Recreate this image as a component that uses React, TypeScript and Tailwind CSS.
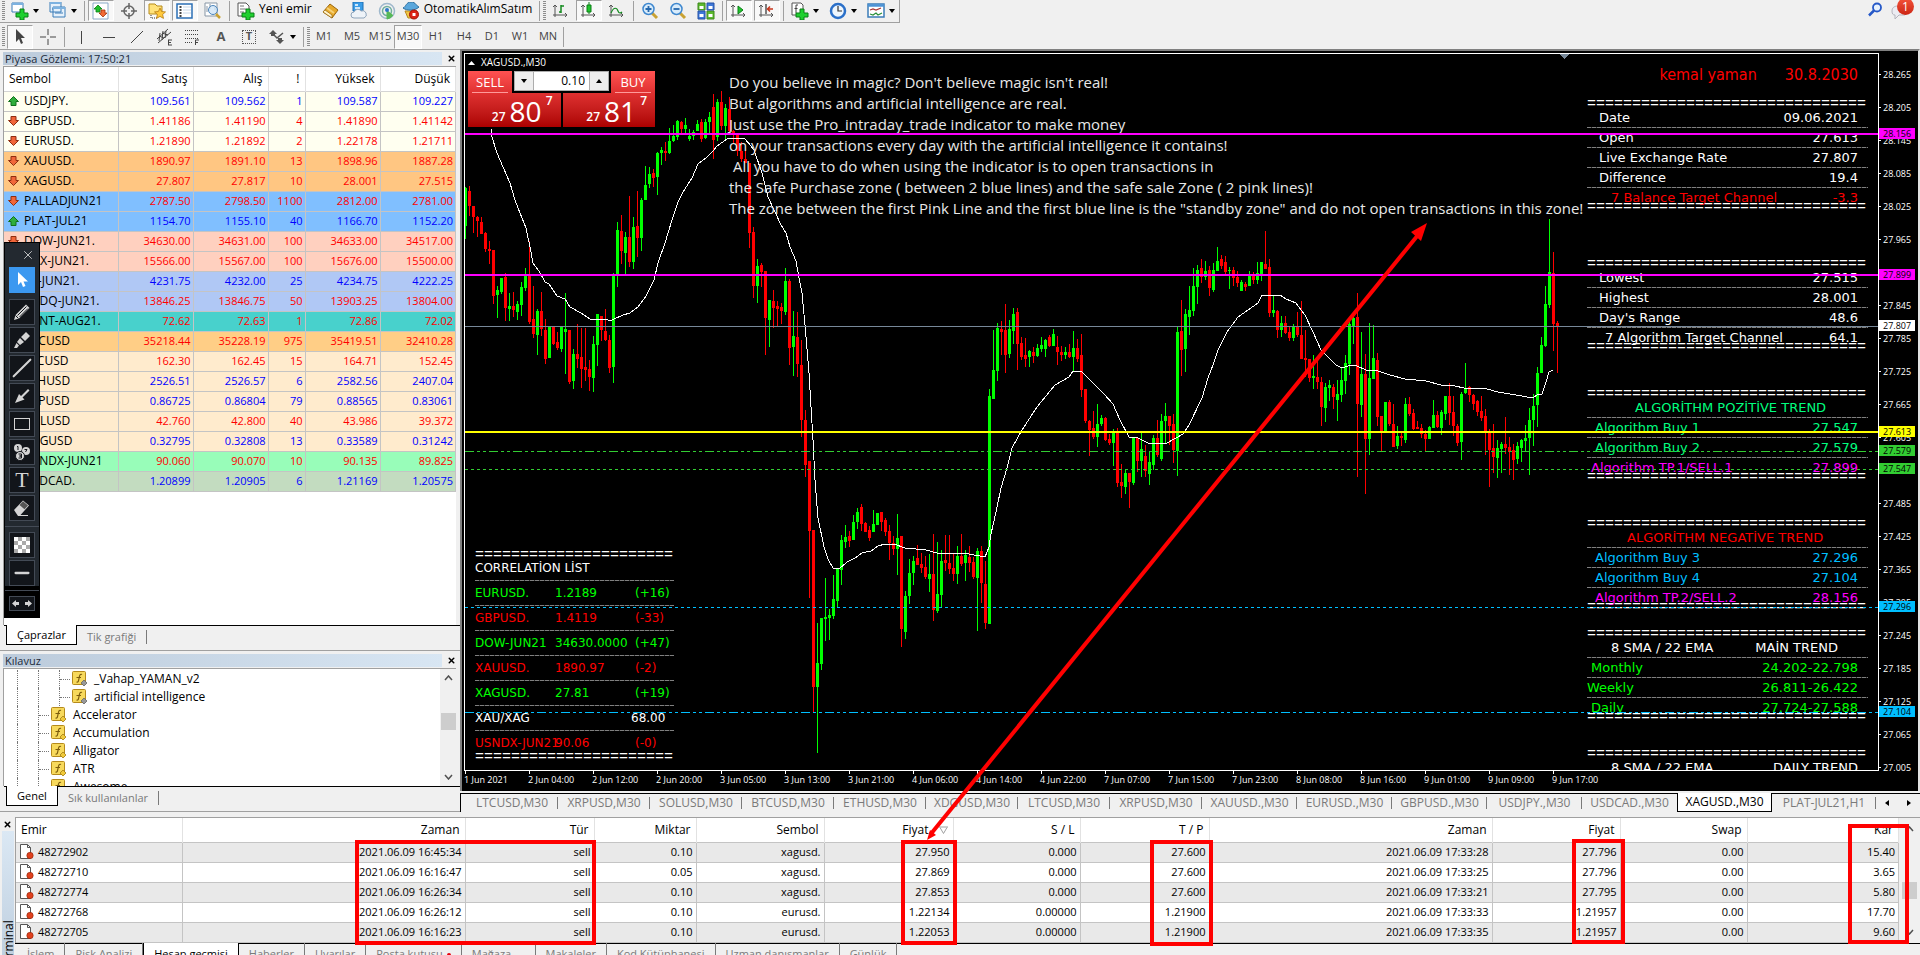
import React from 'react';
import { Minus, Slash, X } from 'lucide-react';

// [high, body top, body bottom, low, rising] in chart pixels
const CANDLES: number[][] = [
  [187,188,226,239,1],[186,191,206,216,0],[206,206,217,233,0],[216,217,221,237,0],[217,222,234,234,0],[232,233,249,252,0],
  [241,249,251,264,0],[250,250,296,304,0],[286,290,295,318,1],[278,278,292,294,1],[273,277,308,321,0],[293,306,309,321,1],
  [292,306,310,317,0],[301,304,312,320,1],[282,287,305,316,1],[268,276,288,291,1],[241,276,322,324,0],[286,319,334,338,0],
  [309,311,335,355,1],[292,311,329,336,0],[319,330,359,364,0],[327,327,358,358,1],[327,327,344,345,0],[332,342,348,350,0],
  [326,327,349,352,1],[293,329,332,374,1],[330,330,382,384,0],[349,354,381,389,1],[324,354,359,368,0],[328,357,369,388,0],
  [328,367,370,381,0],[360,369,377,391,0],[336,344,378,392,1],[314,314,345,366,1],[316,316,330,341,0],[309,331,340,341,0],
  [335,340,368,373,0],[273,274,367,383,1],[222,230,274,287,1],[215,231,251,264,0],[232,237,253,275,1],[196,237,262,267,0],
  [217,227,262,269,1],[191,226,238,257,0],[198,200,238,251,1],[166,185,200,200,1],[167,174,184,188,1],[169,173,178,187,0],
  [152,153,177,195,1],[147,150,153,165,1],[142,151,153,161,0],[128,141,153,154,1],[125,136,141,142,1],[120,121,137,140,1],
  [121,122,129,135,0],[118,125,129,134,1],[129,136,139,141,1],[130,132,136,140,1],[120,124,131,131,1],[119,122,139,142,0],
  [119,122,138,139,1],[112,117,122,134,1],[94,107,140,159,0],[99,102,137,141,1],[91,102,126,130,0],[104,108,126,140,1],
  [97,109,131,133,0],[130,131,134,143,0],[133,133,151,156,0],[142,151,159,162,0],[150,159,163,163,0],[163,163,233,248,0],
  [227,232,286,298,0],[259,266,286,303,1],[263,265,272,287,0],[271,271,318,355,0],[300,300,320,347,1],[290,301,308,328,0],
  [301,306,309,326,0],[303,307,311,324,0],[268,281,312,315,1],[279,281,348,365,0],[311,336,347,376,1],[312,337,364,377,0],
  [340,365,420,437,0],[410,420,465,477,0],[461,461,531,598,0],[530,530,687,713,0],[623,663,687,753,1],[618,618,664,670,1],
  [578,617,619,641,1],[609,615,618,640,1],[575,599,616,619,1],[568,569,601,608,1],[535,540,570,585,1],[525,537,542,548,1],
  [531,536,541,547,0],[515,522,540,540,1],[508,512,522,529,1],[504,507,524,531,0],[522,523,532,532,0],[526,530,538,541,0],
  [510,524,532,532,1],[513,513,525,525,1],[512,512,522,531,0],[518,520,532,536,0],[525,531,543,560,0],[536,543,549,555,0],
  [514,538,549,575,1],[536,536,629,647,0],[591,596,632,639,1],[559,573,596,604,1],[556,561,573,585,1],[545,558,565,565,0],
  [553,564,568,573,0],[556,567,577,579,0],[554,574,579,592,1],[534,574,610,621,0],[542,594,611,613,1],[550,561,595,608,1],
  [535,560,563,571,0],[535,563,569,574,0],[553,568,574,581,0],[546,556,574,584,1],[534,556,564,566,0],[550,555,563,581,1],
  [546,557,563,572,0],[557,562,577,579,0],[548,551,578,631,1],[546,551,583,603,0],[561,584,623,629,0],[389,396,624,624,1],
  [330,370,399,399,1],[323,328,371,381,1],[321,329,332,355,0],[304,330,355,373,0],[320,329,354,358,1],[308,314,331,344,1],
  [308,312,344,370,0],[337,343,357,360,0],[338,355,359,367,0],[350,351,357,367,1],[347,352,356,363,0],[344,348,356,357,1],
  [337,345,349,352,1],[339,340,349,357,1],[335,337,346,347,0],[329,334,346,346,1],[336,347,352,365,0],[346,352,355,361,0],
  [347,352,355,359,1],[344,352,357,358,0],[331,348,357,372,1],[339,348,359,362,0],[334,355,390,397,0],[389,389,421,423,0],
  [420,421,430,456,0],[411,428,437,439,0],[404,424,437,447,1],[415,418,424,426,1],[417,418,440,441,0],[434,439,443,445,0],
  [429,433,443,466,1],[428,433,483,487,0],[464,482,486,498,0],[469,473,487,494,1],[473,473,482,508,0],[437,438,483,485,1],
  [437,438,461,472,0],[433,449,461,477,1],[445,456,471,477,0],[451,462,474,485,1],[435,438,465,470,1],[420,438,455,457,0],
  [414,421,459,461,1],[403,416,421,444,1],[416,416,426,445,0],[414,424,450,463,0],[326,332,451,476,1],[300,331,350,376,0],
  [309,314,349,372,1],[286,310,317,335,1],[268,286,311,316,1],[265,270,287,304,1],[259,268,277,283,0],[261,271,277,280,1],
  [266,270,288,296,0],[263,270,290,292,1],[247,261,271,271,1],[255,259,266,269,0],[256,262,272,276,0],[267,270,271,289,1],
  [267,270,278,286,0],[271,277,283,287,0],[280,282,291,291,1],[282,284,287,291,0],[271,275,286,286,1],[272,275,280,284,0],
  [262,273,280,284,1],[262,262,274,281,1],[231,264,269,269,0],[259,267,313,317,0],[296,310,313,317,1],[310,311,330,338,0],
  [316,323,330,337,1],[316,323,333,334,0],[327,332,338,341,0],[324,326,338,341,1],[312,327,335,337,0],[301,335,359,359,0],
  [330,358,360,377,0],[359,359,378,382,0],[355,376,378,389,1],[359,377,382,389,0],[377,382,407,426,0],[383,387,408,422,1],
  [380,385,388,401,1],[384,387,397,409,0],[380,394,400,421,1],[367,380,395,402,1],[355,363,381,394,1],[322,324,364,375,1],
  [314,318,326,344,1],[293,317,404,477,0],[332,374,405,417,1],[354,374,439,494,0],[323,378,439,455,1],[325,358,379,379,1],
  [353,360,417,426,0],[416,416,433,452,0],[402,402,433,433,1],[400,402,424,426,0],[404,424,447,447,0],[426,436,446,449,1],
  [433,436,438,446,0],[398,404,440,443,1],[397,404,414,416,0],[409,413,429,430,0],[421,427,429,429,0],[424,428,434,438,0],
  [430,434,439,452,0],[426,427,439,439,1],[400,415,428,428,1],[411,415,427,428,0],[410,412,428,435,1],[396,396,414,420,1],
  [383,396,413,425,0],[396,412,426,436,0],[424,426,443,446,0],[392,394,442,460,1],[363,389,393,394,1],[386,387,395,402,0],
  [394,395,404,410,0],[400,401,412,416,0],[396,411,418,421,0],[409,416,432,455,0],[429,432,450,487,0],[424,448,457,473,0],
  [440,448,458,478,1],[442,444,449,473,1],[417,444,448,454,0],[437,447,452,475,0],[444,450,460,480,0],[442,446,459,464,1],
  [439,440,448,462,1],[425,438,441,451,1],[408,420,438,475,1],[394,406,420,446,1],[367,373,405,427,1],[337,345,373,373,1],
  [286,304,346,347,1],[219,272,305,308,1],[252,273,324,351,0],[321,323,327,373,0],
];

const MOVING_AVERAGE =
  '491,129 492,137 497,153 503,167 510,183 515,200 520,213 526,228 530,247 533,263 539,271 545,282 549,284 557,296 565,299 570,307 581,313 590,319 606,319 610,321 614,319 623,315 630,313 638,307 646,296 654,280 658,263 665,243 672,220 678,202 683,192 692,178 698,164 707,157 713,151 717,146 727,139 732,138 745,139 751,146 754,150 762,173 768,197 775,212 781,225 786,233 790,247 796,261 799,278 802,293 805,325 809,373 813,440 815,480 818,518 824,547 828,559 833,568 839,569 847,562 855,558 862,553 871,551 878,546 885,544 894,544 905,548 926,550 937,553 969,554 985,557 989,547 991,534 996,512 1001,488 1007,468 1012,448 1022,430 1037,407 1055,385 1069,377 1073,371 1082,372 1095,385 1104,394 1113,404 1120,420 1129,437 1138,438 1150,444 1167,443 1183,434 1189,425 1202,398 1208,378 1213,365 1218,350 1227,332 1238,317 1258,303 1262,295 1280,295 1286,299 1296,303 1305,315 1313,332 1321,350 1336,365 1342,368 1351,365 1357,366 1366,370 1378,371 1390,375 1405,379 1426,381 1441,385 1455,386 1464,388 1487,389 1498,392 1516,395 1533,398 1537,395 1542,394 1546,382 1549,372 1553,370';

const LEVELS = [
  { price: 28.156, color: '#ff00ff', width: 2, dash: '' },
  { price: 27.899, color: '#ff00ff', width: 2, dash: '' },
  { price: 27.807, color: '#778899', width: 1, dash: '' },
  { price: 27.613, color: '#ffff00', width: 2, dash: '' },
  { price: 27.579, color: '#32cd32', width: 1, dash: '9 3 3 3 3 3' },
  { price: 27.547, color: '#32cd32', width: 1, dash: '3 3' },
  { price: 27.296, color: '#00bfff', width: 1, dash: '3 3' },
  { price: 27.104, color: '#00bfff', width: 1, dash: '9 3 3 3 3 3' },
];

const priceToY = (price: number) => Math.round((28.265 - price) * 549.6) + 20;

const AXIS_PRICES = Array.from({ length: 22 }, (_, i) => (28.265 - i * 0.06).toFixed(3));

const TIMES = [
  '1 Jun 2021', '2 Jun 04:00', '2 Jun 12:00', '2 Jun 20:00', '3 Jun 05:00', '3 Jun 13:00', '3 Jun 21:00', '4 Jun 06:00', '4 Jun 14:00',
  '4 Jun 22:00', '7 Jun 07:00', '7 Jun 15:00', '7 Jun 23:00', '8 Jun 08:00', '8 Jun 16:00', '9 Jun 01:00', '9 Jun 09:00', '9 Jun 17:00',
];

const QUOTES = [
  { name: 'USDJPY.', up: true, tone: 'text-[#0000ff]', bg: 'bg-[#fffff0]', v: ['109.561', '109.562', '1', '109.587', '109.227'] },
  { name: 'GBPUSD.', up: false, tone: 'text-[#ff0000]', bg: 'bg-[#fffff0]', v: ['1.41186', '1.41190', '4', '1.41890', '1.41142'] },
  { name: 'EURUSD.', up: false, tone: 'text-[#ff0000]', bg: 'bg-[#fffff0]', v: ['1.21890', '1.21892', '2', '1.22178', '1.21711'] },
  { name: 'XAUUSD.', up: false, tone: 'text-[#ff0000]', bg: 'bg-[#ffc682]', v: ['1890.97', '1891.10', '13', '1898.96', '1887.28'] },
  { name: 'XAGUSD.', up: false, tone: 'text-[#ff0000]', bg: 'bg-[#ffc682]', v: ['27.807', '27.817', '10', '28.001', '27.515'] },
  { name: 'PALLADJUN21', up: false, tone: 'text-[#ff0000]', bg: 'bg-[#80bfff]', v: ['2787.50', '2798.50', '1100', '2812.00', '2781.00'] },
  { name: 'PLAT-JUL21', up: true, tone: 'text-[#0000ff]', bg: 'bg-[#80bfff]', v: ['1154.70', '1155.10', '40', '1166.70', '1152.20'] },
  { name: 'DOW-JUN21.', up: false, tone: 'text-[#ff0000]', bg: 'bg-[#ffd0bf]', v: ['34630.00', '34631.00', '100', '34633.00', '34517.00'] },
  { name: 'DAX-JUN21.', up: false, tone: 'text-[#ff0000]', bg: 'bg-[#ffd0bf]', v: ['15566.00', '15567.00', '100', '15676.00', '15500.00'] },
  { name: 'SP-JUN21.', up: true, tone: 'text-[#0000ff]', bg: 'bg-[#b0c8f5]', v: ['4231.75', '4232.00', '25', '4234.75', '4222.25'] },
  { name: 'NSDQ-JUN21.', up: false, tone: 'text-[#ff0000]', bg: 'bg-[#b0c8f5]', v: ['13846.25', '13846.75', '50', '13903.25', '13804.00'] },
  { name: 'BRNT-AUG21.', up: false, tone: 'text-[#ff0000]', bg: 'bg-[#48d1cc]', v: ['72.62', '72.63', '1', '72.86', '72.02'] },
  { name: 'BTCUSD', up: false, tone: 'text-[#ff0000]', bg: 'bg-[#ffce86]', v: ['35218.44', '35228.19', '975', '35419.51', '32410.28'] },
  { name: 'LTCUSD', up: false, tone: 'text-[#ff0000]', bg: 'bg-[#ffebcd]', v: ['162.30', '162.45', '15', '164.71', '152.45'] },
  { name: 'ETHUSD', up: true, tone: 'text-[#0000ff]', bg: 'bg-[#ffebcd]', v: ['2526.51', '2526.57', '6', '2582.56', '2407.04'] },
  { name: 'XRPUSD', up: true, tone: 'text-[#0000ff]', bg: 'bg-[#ffebcd]', v: ['0.86725', '0.86804', '79', '0.88565', '0.83061'] },
  { name: 'SOLUSD', up: false, tone: 'text-[#ff0000]', bg: 'bg-[#ffebcd]', v: ['42.760', '42.800', '40', '43.986', '39.372'] },
  { name: 'XDGUSD', up: true, tone: 'text-[#0000ff]', bg: 'bg-[#ffebcd]', v: ['0.32795', '0.32808', '13', '0.33589', '0.31242'] },
  { name: 'USNDX-JUN21', up: false, tone: 'text-[#ff0000]', bg: 'bg-[#98fdb9]', v: ['90.060', '90.070', '10', '90.135', '89.825'] },
  { name: 'USDCAD.', up: true, tone: 'text-[#0000ff]', bg: 'bg-[#c3dcc0]', v: ['1.20899', '1.20905', '6', '1.21169', '1.20575'] },
];

const ORDERS = [
  ['48272902', '2021.06.09 16:45:34', 'sell', '0.10', 'xagusd.', '27.950', '0.000', '27.600', '2021.06.09 17:33:28', '27.796', '0.00', '15.40'],
  ['48272710', '2021.06.09 16:16:47', 'sell', '0.05', 'xagusd.', '27.869', '0.000', '27.600', '2021.06.09 17:33:25', '27.796', '0.00', '3.65'],
  ['48272774', '2021.06.09 16:26:34', 'sell', '0.10', 'xagusd.', '27.853', '0.000', '27.600', '2021.06.09 17:33:21', '27.795', '0.00', '5.80'],
  ['48272768', '2021.06.09 16:26:12', 'sell', '0.10', 'eurusd.', '1.22134', '0.00000', '1.21900', '2021.06.09 17:33:33', '1.21957', '0.00', '17.70'],
  ['48272705', '2021.06.09 16:16:23', 'sell', '0.10', 'eurusd.', '1.22053', '0.00000', '1.21900', '2021.06.09 17:33:35', '1.21957', '0.00', '9.60'],
];

const CHART_TABS = [
  'LTCUSD,M30', 'XRPUSD,M30', 'SOLUSD,M30', 'BTCUSD,M30', 'ETHUSD,M30', 'XDGUSD,M30', 'LTCUSD,M30', 'XRPUSD,M30',
  'XAUUSD.,M30', 'EURUSD.,M30', 'GBPUSD.,M30', 'USDJPY.,M30', 'USDCAD.,M30', 'XAGUSD.,M30', 'PLAT-JUL21,H1',
];

/* ---------- icons ---------- */

const Icon = ({ children, w = 18 }: { children: React.ReactNode; w?: number }) => (
  <svg width={w} height="18" viewBox={`0 0 ${w} 18`} fill="none" className="shrink-0" aria-hidden="true">
    {children}
  </svg>
);

const plus = <path d="M9 7h4v4h4v4h-4v3H9v-3H5v-4h4z" fill="#1fd02f" stroke="#0a7f16" />;

const NewChartIcon = () => (
  <Icon>
    <path d="M1 1h11v9H1z" fill="#fff" stroke="#3b7cb8" />
    <path d="M1 2h11" stroke="#7db2e0" strokeWidth="2" />
    {plus}
  </Icon>
);
const ProfilesIcon = () => (
  <Icon>
    <path d="M1 0h11v10H1zM4 5h12v10H4z" fill="#e6f1fb" stroke="#3b7cb8" />
    <path d="M4 6h12M1 1h11" stroke="#7db2e0" strokeWidth="2" />
    <path d="M6 11h8M3 7h1" stroke="#3b7cb8" />
  </Icon>
);
const MarketIcon = () => (
  <Icon>
    <path d="M1 1h15v16H1z" fill="#fff" stroke="#8aa9c8" />
    <path d="M6 3l4 4H8v3H4V7H2z" fill="#1fbf2c" stroke="#0a7f16" strokeWidth=".8" />
    <path d="M11 15l-4-4h2V8h4v3h2z" fill="#f26a35" stroke="#a3330c" strokeWidth=".8" />
  </Icon>
);
const TargetIcon = () => (
  <Icon>
    <circle cx="9" cy="9" r="5" stroke="#666" strokeWidth="1.5" />
    <path d="M9 1v6M9 11v6M1 9h6M11 9h6" stroke="#666" strokeWidth="1.5" />
  </Icon>
);
const NavigatorIcon = () => (
  <Icon>
    <path d="M1 2h6l2 2h5v8H1z" fill="#ffe27a" stroke="#b78b1c" />
    <path d="M3 13v3h6" stroke="#333" strokeDasharray="1 1" />
    <path d="M12 6l1.600 3.500 3.900.400-2.900 2.600.900 3.900L12 14.400l-3.500 2 .900-3.900L6.500 9.900l3.900-.400z" fill="#ffc93c" stroke="#b67a10" strokeWidth=".8" />
  </Icon>
);
const DataWindowIcon = () => (
  <Icon>
    <path d="M1 2h15v14H1z" fill="#fff" stroke="#2b6fb5" strokeWidth="1.500" />
    <path d="M4.500 4v11" stroke="#444" strokeWidth="2" strokeDasharray="2 1" />
    <path d="M7 5h8M7 8h8M7 11h8" stroke="#c7d7e8" />
  </Icon>
);
const TesterIcon = () => (
  <Icon>
    <path d="M1 1h12v13H1z" fill="#fff" stroke="#8796a5" />
    <path d="M3 4v6M6 2v5M11 4v4" stroke="#8796a5" />
    <circle cx="9" cy="8" r="4.500" fill="#cfe5f8" fillOpacity=".8" stroke="#4a84bb" />
    <path d="M12 12l4 4" stroke="#c9a233" strokeWidth="2.500" />
  </Icon>
);
const NewOrderIcon = () => (
  <Icon>
    <path d="M1 1h8l3 3v10H1z" fill="#fff" stroke="#555" />
    <path d="M3 4h4M3 7h6M3 10h4" stroke="#777" />
    {plus}
  </Icon>
);
const BookIcon = () => (
  <Icon>
    <path d="M1 10l7-8 8 6-6 8z" fill="#e6a92b" stroke="#9a650a" />
    <path d="M1 10l9 6v-3L3 8z" fill="#fff3c9" stroke="#9a650a" strokeWidth=".7" />
    <path d="M5 6l7 5" stroke="#f7d277" strokeWidth="2" />
  </Icon>
);
const CloudIcon = () => (
  <Icon>
    <path d="M3 0h10v9H3z" fill="#3a9de8" stroke="#1d6fb4" />
    <path d="M5 3h3M5 6h5" stroke="#fff" strokeWidth="1.500" />
    <path d="M4 16a3 3 0 010-6 4 4 0 017-1 3.500 3.500 0 013 7z" fill="#eef3f8" stroke="#8fa5bb" />
  </Icon>
);
const SignalIcon = () => (
  <Icon>
    <circle cx="9" cy="9" r="7.500" stroke="#9fb8cc" strokeWidth="1.500" />
    <circle cx="9" cy="9" r="4.500" stroke="#6fae9d" strokeWidth="1.500" />
    <path d="M9 8v9a8 8 0 006-4" fill="#57b957" stroke="#57b957" />
    <circle cx="9" cy="8" r="2" fill="#2f78c8" />
  </Icon>
);
const AdvisorIcon = () => (
  <Icon>
    <path d="M3 9l3 7h7l2-7z" fill="#f2c545" stroke="#b8871a" />
    <path d="M1 6c3-1 3-6 8-6s5 4 8 5c-4 4-12 4-16 1z" fill="#5aa7dc" stroke="#2d6f9f" />
    <circle cx="12" cy="12.500" r="4.500" fill="#dc2414" stroke="#a21408" />
    <path d="M10.500 11h3v3h-3z" fill="#fff" />
  </Icon>
);
const axis = <path d="M3 3v12M1 13h14M1 5l2-2 2 2M13 11l2 2-2 2" stroke="#555" />;
const BarChartIcon = () => (
  <Icon>
    {axis}
    <path d="M9 3v8M9 4h3M7 10h2" stroke="#138a1e" strokeWidth="1.500" />
  </Icon>
);
const CandleChartIcon = () => (
  <Icon>
    {axis}
    <path d="M9 0v12" stroke="#0a7f16" />
    <path d="M7 3h4v7H7z" fill="#22c52e" stroke="#0a7f16" />
  </Icon>
);
const LineChartIcon = () => (
  <Icon>
    {axis}
    <path d="M3 11c3-7 6-5 7-2s3 2 4 1" stroke="#138a1e" strokeWidth="1.200" />
  </Icon>
);
const ZoomGlyph = ({ mode }: { mode: 'in' | 'out' }) => (
  <Icon>
    <path d="M11 11l5 5" stroke="#c9a233" strokeWidth="3" />
    <circle cx="7.500" cy="7" r="5.500" fill="#d9ecfb" stroke="#3f88cf" strokeWidth="1.500" />
    <path d={mode === 'in' ? 'M4.500 7h6M7.500 4v6' : 'M4.500 7h6'} stroke="#2568ad" strokeWidth="1.800" />
  </Icon>
);
const TilesIcon = () => (
  <Icon>
    <path d="M1 1h7v7H1zM10 9h7v8h-7z" fill="#5dbb2e" stroke="#3c861a" />
    <path d="M10 1h7v7h-7zM1 9h7v8H1z" fill="#3f78d8" stroke="#2550a5" />
    <path d="M2.500 4h4v3h-4zM11.500 4h4v3h-4zM2.500 12h4v3h-4zM11.500 12h4v3h-4z" fill="#fff" />
  </Icon>
);
const AutoScrollIcon = () => (
  <Icon>
    {axis}
    <path d="M8 4l5 4-5 4z" fill="#22c52e" stroke="#0a7f16" />
  </Icon>
);
const ShiftIcon = () => (
  <Icon>
    {axis}
    <path d="M8 2v10" stroke="#555" strokeWidth="1.500" />
    <path d="M15 7h-5M12 4.500L9.500 7 12 9.500" stroke="#c8361c" strokeWidth="1.500" />
  </Icon>
);
const IndicatorIcon = () => (
  <Icon>
    <path d="M1 1h9l2 2v10H1z" fill="#fff" stroke="#555" />
    <path d="M7 3H5v8M3.500 6.500h3" stroke="#444" />
    {plus}
  </Icon>
);
const ClockIcon = () => (
  <Icon>
    <circle cx="9" cy="9" r="7" fill="#eef6fd" stroke="#2b70c9" strokeWidth="2.500" />
    <path d="M9 4v5h4" stroke="#333" strokeWidth="1.200" />
  </Icon>
);
const TemplateIcon = () => (
  <Icon>
    <path d="M1 2h16v13H1z" fill="#fff" stroke="#3b7cb8" strokeWidth="1.500" />
    <path d="M1 3.500h16" stroke="#4d93d6" strokeWidth="2.500" />
    <path d="M3 8l3-1 3 1 5-2" stroke="#a33" strokeWidth="1.200" />
    <path d="M3 12l3 1 3-2 2 2 4-2" stroke="#2a8f3a" strokeWidth="1.200" />
  </Icon>
);

const Caret = () => (
  <svg width="6" height="4" viewBox="0 0 6 4" className="shrink-0" aria-hidden="true">
    <path d="M0 0h6L3 4z" fill="#000" />
  </svg>
);

const Grip = () => <div className="h-5 w-[3px] shrink-0 bg-[repeating-linear-gradient(#8d8d8d_0_1px,#f0f0f0_1px_2px)]" />;

const Sep = () => <div className="mx-px h-5 w-px shrink-0 bg-[#a0a0a0]" />;

interface ToolProps {
  label: string;
  pressed?: boolean;
  menu?: boolean;
  children: React.ReactNode;
}

const Tool = ({ label, pressed, menu, children }: ToolProps) => (
  <button
    aria-label={label}
    className={`flex h-full shrink-0 items-center justify-center gap-1 ${menu ? 'w-9' : 'w-[26px]'} ${
      pressed ? 'border border-[#a0a0a0] border-r-white border-b-white bg-[#f8f8f8]' : ''
    }`}
  >
    {children}
    {menu && <Caret />}
  </button>
);

const TopToolbar = () => (
  <div className="flex h-[23px] items-start">
    <div className="flex h-[23px] shrink-0 items-start border-r border-b border-[#a0a0a0] pl-[2px]">
      <div className="flex h-[21px] items-center gap-[2px]">
        <Grip />
        <Tool label="Yeni grafik" menu><NewChartIcon /></Tool>
        <Tool label="Profiller" menu><ProfilesIcon /></Tool>
        <Sep />
        <Tool label="Piyasa Gözlemi" pressed><MarketIcon /></Tool>
        <Tool label="Veri penceresi"><TargetIcon /></Tool>
        <Tool label="Kılavuz" pressed><NavigatorIcon /></Tool>
        <Tool label="Terminal" pressed><DataWindowIcon /></Tool>
        <Tool label="Strateji testi"><TesterIcon /></Tool>
        <Sep />
        <button className="ml-1 flex h-full items-center gap-1 pr-1">
          <NewOrderIcon /> <span className="-mt-1">Yeni emir</span>
        </button>
        <Tool label="MetaEditor"><BookIcon /></Tool>
        <Tool label="VPS"><CloudIcon /></Tool>
        <Tool label="Sinyaller"><SignalIcon /></Tool>
        <button className="flex h-full items-center gap-1 pr-1">
          <AdvisorIcon /> <span className="-mt-1">OtomatikAlımSatım</span>
        </button>
        <Sep />
        <Grip />
        <Tool label="Bar grafik"><BarChartIcon /></Tool>
        <Tool label="Mum grafik" pressed><CandleChartIcon /></Tool>
        <Tool label="Çizgi grafik"><LineChartIcon /></Tool>
        <Sep />
        <Tool label="Yakınlaştır"><ZoomGlyph mode="in" /></Tool>
        <Tool label="Uzaklaştır"><ZoomGlyph mode="out" /></Tool>
        <Tool label="Döşe"><TilesIcon /></Tool>
        <Sep />
        <Tool label="Otomatik kaydır" pressed><AutoScrollIcon /></Tool>
        <Tool label="Grafik kaydırma" pressed><ShiftIcon /></Tool>
        <Sep />
        <Tool label="Göstergeler" menu><IndicatorIcon /></Tool>
        <Tool label="Periyotlar" menu><ClockIcon /></Tool>
        <Tool label="Şablonlar" menu><TemplateIcon /></Tool>
      </div>
    </div>
    <div className="ml-auto flex h-[21px] items-start pr-1.5">
      <svg width="16" height="16" viewBox="0 0 16 16" fill="none" className="mt-0.5 mr-2" aria-hidden="true">
        <circle cx="10" cy="5.500" r="4" fill="#e8f2fd" stroke="#2558c8" strokeWidth="1.800" />
        <path d="M7 8.500l-5 5" stroke="#2558c8" strokeWidth="2.500" />
      </svg>
      <svg width="14" height="16" viewBox="0 0 14 16" fill="none" className="mt-1" aria-hidden="true">
        <path d="M7 2C3 2 1 4 1 7s1 4 3 4v4l4-4h6V2z" fill="#ececf2" stroke="#b5b5bd" />
      </svg>
      <span className="-mt-0.5 -ml-2 flex size-[17px] items-center justify-center rounded-full bg-linear-to-b from-[#f4533a] to-[#cc2412] text-[12px] text-white">1</span>
    </div>
  </div>
);

const FRAMES = ['M1', 'M5', 'M15', 'M30', 'H1', 'H4', 'D1', 'W1', 'MN'];

const DrawToolbar = () => (
  <div className="flex h-[26px] items-center pt-px pl-[2px]">
    <Grip />
    <div className="ml-0.5 flex h-6 items-center gap-[2px]">
      <Tool label="İmleç" pressed>
        <Icon w={12}><path d="M2 1v13l3-3 2 5 2-1-2-5h4z" fill="#444" /></Icon>
      </Tool>
      <Tool label="Artı imleç">
        <Icon><path d="M9 1v6M9 11v6M1 9h6M11 9h6" stroke="#444" /></Icon>
      </Tool>
      <Sep />
      <Tool label="Dikey çizgi"><Icon><path d="M9.500 3v13" stroke="#444" /></Icon></Tool>
      <Tool label="Yatay çizgi"><Icon><path d="M3 9.500h12" stroke="#444" /></Icon></Tool>
      <Tool label="Eğilim çizgisi"><Icon><path d="M3 15L15 3" stroke="#444" /></Icon></Tool>
      <Tool label="Kanal">
        <Icon>
          <path d="M1 11L12 1M2 15L15 4M4 5l-1 8M7 3L6 12M10 3L9 10M3 8l5 2M6 5l6 2" stroke="#444" />
          <path d="M12 12h4M12 14.500h3M12 17h4M12.500 12v5" stroke="#444" />
        </Icon>
      </Tool>
      <Tool label="Fibonacci">
        <Icon>
          <path d="M1 2.500h13M1 6.500h13M1 10.500h13M1 14.500h8" stroke="#444" strokeDasharray="1 1" />
          <path d="M11.500 17v-5H15M11.500 14.500H14" stroke="#444" />
        </Icon>
      </Tool>
      <Tool label="Metin"><span className="text-[13px] font-bold text-[#555]">A</span></Tool>
      <Tool label="Metin etiketi">
        <span className="flex size-[14px] items-center justify-center border border-dotted border-[#555] text-[11px] font-bold text-[#555]">T</span>
      </Tool>
      <Tool label="Oklar" menu>
        <Icon>
          <path d="M5 2l4 4H7v2H3V6H1zM12 16l-4-4h2v-2h4v2h2z" fill="#555" />
          <path d="M6 7l3 3 6-5" stroke="#555" strokeWidth="1.500" />
        </Icon>
      </Tool>
      <Sep />
    </div>
    <div className="ml-0.5 flex h-6 items-center">
      <Grip />
      <div className="flex h-6">
        {FRAMES.map((f) => (
          <button
            key={f}
            className={`w-7 text-[11px] text-[#444] ${f === 'M30' ? 'border border-[#a0a0a0] border-r-white border-b-white bg-[#f8f8f8]' : ''}`}
          >
            {f}
          </button>
        ))}
      </div>
      <Sep />
    </div>
  </div>
);

const PanelTitle = ({ title }: { title: string }) => (
  <div className="flex h-[13px] items-center pl-[3px]">
    <div className="flex h-[13px] flex-1 items-center bg-linear-to-r from-[#bccbdb] to-[#d8e6f3] pl-0.5 text-[11px] leading-[13px] text-[#1b2a3a]">{title}</div>
    <button aria-label="Kapat" className="flex w-[18px] justify-center">
      <X size={9} strokeWidth={4} />
    </button>
  </div>
);

const Direction = ({ up }: { up: boolean }) => (
  <svg width="11" height="10" viewBox="0 0 11 10" className="shrink-0" aria-hidden="true">
    {up ? (
      <path d="M5.500 .5l5 5H8v4H3v-4H.5z" fill="#2fae3c" stroke="#12701c" />
    ) : (
      <path d="M5.500 9.500l-5-5H3v-4h5v4h2.500z" fill="#f0663a" stroke="#8f2d10" />
    )}
  </svg>
);

const BottomTabs = ({ active, other }: { active: string; other: string }) => (
  <div className="ml-1 flex h-[25px] border-t border-black">
    <button className="ml-0.5 -mt-px h-5 border border-t-0 border-black bg-white px-2.5 text-[11px] leading-[19px]">{active}</button>
    <button className="h-5 px-2.5 text-[11px] leading-[19px] text-[#7a7a7a]">{other}</button>
    <div className="mt-1 h-3.5 w-px bg-[#7a7a7a]" />
  </div>
);

const MarketWatch = () => (
  <section className="relative flex min-h-0 flex-1 flex-col border-b border-[#a0a0a0] pt-[2px]">
    <PanelTitle title="Piyasa Gözlemi: 17:50:21" />
    <div className="mt-px mr-1 ml-[3px] min-h-0 flex-1 border-t border-l border-[#a0a0a0] bg-white">
      <table className="w-full table-fixed border-collapse">
        <colgroup>
          <col className="w-[114px]" />
          <col className="w-[75px]" />
          <col className="w-[75px]" />
          <col className="w-[37px]" />
          <col className="w-[75px]" />
          <col />
        </colgroup>
        <thead>
          <tr className="h-6 border-b border-[#d4d4d4]">
            {['Sembol', 'Satış', 'Alış', '!', 'Yüksek', 'Düşük'].map((h, i) => (
              <th key={h} className={`border-r border-[#e2e2e2] px-[5px] font-normal ${i === 0 ? 'text-left' : 'text-right'}`}>{h}</th>
            ))}
          </tr>
        </thead>
        <tbody>
          {QUOTES.map((q) => (
            <tr key={q.name} className={`h-5 border-b border-[#c4c4c4] align-top ${q.bg}`}>
              <td className="border-r border-[#c4c4c4] p-0">
                <div className="flex h-[18px] items-center gap-[5px] pl-1">
                  <Direction up={q.up} />
                  <span>{q.name}</span>
                </div>
              </td>
              {q.v.map((v, i) => (
                <td key={i} className={`border-r border-[#c4c4c4] p-0 pr-[2px] text-right text-[11px] leading-[18px] ${q.tone}`}>{v}</td>
              ))}
            </tr>
          ))}
        </tbody>
      </table>
    </div>
    <BottomTabs active="Çaprazlar" other="Tik grafiği" />
    <ScreenMarker />
  </section>
);

const markerBtn = 'flex size-[26px] items-center justify-center border border-[#434a55] bg-[#12151a] text-[#d4d4d4]';

// floating annotation palette, sits over the quote list
const ScreenMarker = () => (
  <div className="absolute top-48 left-1 flex w-9 flex-col items-center border border-black bg-[#232930]">
    <button aria-label="Kapat" className="flex h-6 w-full items-center justify-end pr-1 text-[#d4d4d4]"><X size={14} strokeWidth={1.5} /></button>
    <button aria-label="Seç" className="mb-1.5 flex size-[26px] items-center justify-center bg-[#3b98f0]">
      <Icon><path d="M5 1v13l3-3 2 5 2.500-1-2-4.500H15z" fill="#fff" /></Icon>
    </button>
    <div className="flex flex-col gap-0.5">
      <button aria-label="Kalem" className={markerBtn}>
        <Icon>
          <path d="M1 17l1.500-5L13 1.500 16.500 5 6 15.500z" fill="#d4d4d4" />
          <path d="M4.500 12.500l9-9M6.500 14l8.500-8.500M2.500 12.500l3 3" stroke="#12151a" />
        </Icon>
      </button>
      <button aria-label="Vurgulayıcı" className={markerBtn}>
        <Icon>
          <path d="M8 6l5-5 4 4-5 5zM7 7l4 4-4 3-3-3zM3.500 12l2.500 2.500L4 17H1z" fill="#d4d4d4" />
        </Icon>
      </button>
      <button aria-label="Çizgi" className={markerBtn}><Slash size={20} strokeWidth={2.5} /></button>
      <button aria-label="Ok" className={markerBtn}>
        <Icon><path d="M2 16l4-9 2 2 7-7 1.500 1.500-7 7 2 2z" fill="#d4d4d4" /></Icon>
      </button>
      <button aria-label="Dikdörtgen" className={markerBtn}><span className="h-3 w-4 border border-[#d4d4d4]" /></button>
      <button aria-label="Numara" className={markerBtn}>
        <Icon>
          <circle cx="5" cy="5" r="4" fill="#d4d4d4" />
          <circle cx="13" cy="8" r="4" fill="#d4d4d4" />
          <circle cx="7" cy="13" r="4.500" fill="#d4d4d4" stroke="#12151a" />
          <path d="M4 3.500h1V7M11.500 6.500h2.500L12.500 9M5.500 11h3v2h-2 2v2h-3" stroke="#12151a" />
        </Icon>
      </button>
      <button aria-label="Metin" className={markerBtn}><span className="font-['Liberation_Serif',serif] text-[22px] leading-none">T</span></button>
      <button aria-label="Silgi" className={markerBtn}>
        <Icon>
          <path d="M1 11l9-9.500 6 5L7.500 16H15v1H5z" fill="#d4d4d4" />
          <path d="M6.500 6L10 2.300l5 4.200-3.500 3.800z" fill="#555" />
        </Icon>
      </button>
    </div>
    <div className="my-[5px] h-px w-full bg-[#434a55]" />
    <div className="flex flex-col gap-0.5">
      <button aria-label="Saydamlık" className={markerBtn}>
        <span className="size-4 bg-[repeating-conic-gradient(#a9a9a9_0_25%,#fff_0_50%)] bg-size-[8px_8px]" />
      </button>
      <button aria-label="Kalınlık" className={markerBtn}><Minus size={22} strokeWidth={2.5} /></button>
    </div>
    <div className="flex w-full flex-col items-center bg-black pt-1 pb-1.5">
      <div className="mb-[5px] h-px w-full bg-[#434a55]" />
      <button aria-label="Taşı" className="flex h-[15px] w-[26px] items-center justify-center border border-[#434a55] bg-[#12151a]">
        <svg width="20" height="7" viewBox="0 0 20 7" aria-hidden="true">
          <path d="M0 3.500L4 0v2h3v3H4v2zM20 3.500L16 0v2h-3v3h3v2z" fill="#d4d4d4" />
        </svg>
      </button>
    </div>
  </div>
);

const TREE = [
  { label: '_Vahap_YAMAN_v2', depth: 3 },
  { label: 'artificial intelligence', depth: 3 },
  { label: 'Accelerator', depth: 2 },
  { label: 'Accumulation', depth: 2 },
  { label: 'Alligator', depth: 2 },
  { label: 'ATR', depth: 2 },
  { label: 'Awesome', depth: 2 },
];

const Navigator = () => (
  <section className="flex h-[161px] shrink-0 flex-col border-b border-[#a0a0a0] pt-[3px]">
    <PanelTitle title="Kılavuz" />
    <div className="mt-px mr-1 ml-[3px] flex h-[118px] overflow-hidden border-t border-l border-[#a0a0a0] bg-white">
      <ul className="flex-1 pt-px">
        {TREE.map((n) => (
          <li key={n.label} className="flex h-[18px] items-stretch pl-[13px]">
            <span className="w-[21px] border-l border-dotted border-[#777]" />
            <span className={`flex items-center border-l border-dotted border-[#777] ${n.depth === 3 ? 'w-[21px]' : 'w-[13px]'}`}>
              {n.depth === 2 && <span className="w-2.5 border-t border-dotted border-[#777]" />}
            </span>
            {n.depth === 3 && (
              <span className="flex w-[13px] items-center border-l border-dotted border-[#777]">
                <span className="w-2.5 border-t border-dotted border-[#777]" />
              </span>
            )}
            <svg width="16" height="16" viewBox="0 0 16 16" className="mt-px shrink-0" aria-hidden="true">
              <rect x=".5" y=".5" width="13" height="13" rx="1" fill="#f7d95c" stroke="#b58a1b" />
              <path d="M10 3.500c-2-1-2.500 1-3 4s-1 4-2.500 3.500M4.500 6.500h4.500" stroke="#7c5c0c" fill="none" strokeWidth="1.200" />
              <path d="M12 9l3 3-3 3-3-3z" fill={n.depth === 3 ? '#999' : '#f0c93a'} stroke={n.depth === 3 ? '#666' : '#a37d14'} strokeWidth=".8" />
            </svg>
            <span className="pl-[6px] text-[12px] leading-[18px]">{n.label}</span>
          </li>
        ))}
      </ul>
      <div className="flex w-4 flex-col items-center justify-between bg-[#f0f0f0] py-1.5">
        <svg width="9" height="6" viewBox="0 0 9 6" aria-hidden="true"><path d="M1 5l3.500-4L8 5" fill="none" stroke="#505050" strokeWidth="1.500" /></svg>
        <div className="mt-5 h-[17px] w-[15px] bg-[#cdcdcd]" />
        <svg width="9" height="6" viewBox="0 0 9 6" className="mt-8" aria-hidden="true"><path d="M1 1l3.500 4L8 1" fill="none" stroke="#505050" strokeWidth="1.500" /></svg>
      </div>
    </div>
    <BottomTabs active="Genel" other="Sık kullanılanlar" />
  </section>
);

/* ---------- chart ---------- */

const Rule = ({ count = 31 }: { count?: number }) => (
  <div className="h-[18px] overflow-hidden font-['Liberation_Mono',monospace] text-[15px] leading-[18px] whitespace-nowrap text-white">{'='.repeat(count)}</div>
);

const Dashes = () => <div className="h-px bg-[repeating-linear-gradient(90deg,#808080_0_4px,#303030_4px_5px)]" />;

interface StatRow {
  label: string;
  value?: string;
  indent: string;
  tone: string;
  valueEnd?: string;
}

const W = 'text-white';
const G = 'text-[#00ff7f]';
const L = 'text-[#00ff00]';
const B = 'text-[#00bfff]';
const M = 'text-[#ff00ff]';
const R = 'text-[#ff0000]';

const BLOCKS: { gap: string; rows: StatRow[] }[] = [
  {
    gap: 'mt-0',
    rows: [
      { label: 'Date', value: '09.06.2021', indent: 'pl-3', tone: W },
      { label: 'Open', value: '27.613', indent: 'pl-3', tone: W },
      { label: 'Live Exchange Rate', value: '27.807', indent: 'pl-3', tone: W },
      { label: 'Difference', value: '19.4', indent: 'pl-3', tone: W },
      { label: '7 Balance Target Channel', value: '-3.3', indent: 'pl-6', tone: R },
    ],
  },
  {
    gap: 'mt-[39px]',
    rows: [
      { label: 'Lowest', value: '27.515', indent: 'pl-3', tone: W },
      { label: 'Highest', value: '28.001', indent: 'pl-3', tone: W },
      { label: "Day's Range", value: '48.6', indent: 'pl-3', tone: W },
      { label: '7 Algorithm Target Channel', value: '64.1', indent: 'pl-[18px]', tone: W },
    ],
  },
  {
    gap: 'mt-[29px]',
    rows: [
      { label: 'ALGORİTHM POZİTİVE TREND', indent: 'pl-12', tone: G },
      { label: 'Algorithm Buy 1', value: '27.547', indent: 'pl-2', tone: G },
      { label: 'Algorithm Buy 2', value: '27.579', indent: 'pl-2', tone: G },
      { label: 'Algorithm TP.1/SELL.1', value: '27.899', indent: 'pl-1', tone: M },
    ],
  },
  {
    gap: 'mt-[29px]',
    rows: [
      { label: 'ALGORİTHM NEGATİVE TREND', indent: 'pl-10', tone: R },
      { label: 'Algorithm Buy 3', value: '27.296', indent: 'pl-2', tone: B },
      { label: 'Algorithm Buy 4', value: '27.104', indent: 'pl-2', tone: B },
      { label: 'Algorithm TP.2/SELL.2', value: '28.156', indent: 'pl-2', tone: M },
    ],
  },
  {
    gap: 'mt-[9px]',
    rows: [
      { label: '8 SMA / 22 EMA', value: 'MAİN TREND', indent: 'pl-6', tone: W, valueEnd: 'pr-[30px]' },
      { label: 'Monthly', value: '24.202-22.798', indent: 'pl-1', tone: L },
      { label: 'Weekly', value: '26.811-26.422', indent: 'pl-0', tone: L },
      { label: 'Daily', value: '27.724-27.588', indent: 'pl-1', tone: L },
    ],
  },
];

const StatPanel = () => (
  <div className="w-[281px] shrink-0 pt-[7px] font-['DejaVu_Sans',sans-serif] text-[13px] whitespace-nowrap">
    <div className="mb-[7px] flex h-7 items-center justify-end gap-7 pr-2.5 font-['DejaVu_Sans_Condensed','DejaVu_Sans',sans-serif] text-[16px] text-[#ff0000]">
      <span>kemal yaman</span>
      <span>30.8.2030</span>
    </div>
    {BLOCKS.map((b, i) => (
      <div key={i} className={b.gap}>
        <div className="-mb-1.5"><Rule /></div>
        {b.rows.map((r, j) => (
          <React.Fragment key={r.label}>
            <div className={`flex items-center justify-between ${j === b.rows.length - 1 ? 'h-5' : 'h-[19px]'} ${r.indent} ${r.tone} ${r.valueEnd ?? 'pr-2.5'}`}>
              <span>{r.label}</span>
              <span>{r.value}</span>
            </div>
            {j < b.rows.length - 1 && <Dashes />}
          </React.Fragment>
        ))}
        <div className="-mt-[9px]"><Rule /></div>
      </div>
    ))}
    <div className="mt-[19px]">
      <div className="-mb-1.5"><Rule /></div>
      <div className="flex h-5 items-center justify-between pr-2.5 pl-6 text-white">
        <span>8 SMA / 22 EMA</span>
        <span>DAILY TREND</span>
      </div>
    </div>
  </div>
);

const CORRELATION = [
  { a: 'EURUSD.', b: '1.2189', c: '(+16)', tone: L },
  { a: 'GBPUSD.', b: '1.4119', c: '(-33)', tone: R },
  { a: 'DOW-JUN21', b: '34630.0000', c: '(+47)', tone: L },
  { a: 'XAUUSD.', b: '1890.97', c: '(-2)', tone: R },
  { a: 'XAGUSD.', b: '27.81', c: '(+19)', tone: L },
  { a: 'XAU/XAG', b: '', c: '68.00', tone: W },
  { a: 'USNDX-JUN21', b: '90.06', c: '(-0)', tone: R },
];

const CorrelationList = () => (
  <div className="mb-[3px] ml-2.5 w-[199px] font-['DejaVu_Sans',sans-serif] text-[12px] whitespace-nowrap">
    <div className="-mb-[5px]"><Rule count={22} /></div>
    <div className="h-5 leading-4 text-white">CORRELATİON LİST</div>
    {CORRELATION.map((r) => (
      <React.Fragment key={r.a}>
        <Dashes />
        <div className={`flex h-6 items-center ${r.tone}`}>
          <span className="w-20">{r.a}</span>
          <span className="w-20">{r.b}</span>
          <span className={r.b ? '' : '-ml-1'}>{r.c}</span>
        </div>
      </React.Fragment>
    ))}
    <div className="-mt-1.5"><Rule count={22} /></div>
  </div>
);

const NOTES = [
  "Do you believe in magic? Don't believe magic isn't real!",
  'But algorithms and artificial intelligence are real.',
  'Just use the Pro_intraday_trade indicator to make money',
  'on your transactions every day with the artificial intelligence it contains!',
  ' All you have to do when using the indicator is to open transactions in',
  'the Safe Purchase zone ( between 2 blue lines) and the safe sale Zone ( 2 pink lines)!',
  'The zone between the first Pink Line and the first blue line is the "standby zone" and do not open transactions in this zone!',
];

const TradePanel = () => (
  <div className="ml-[3px] w-[187px] text-white">
    <div className="flex h-[22px] justify-between">
      <button className="w-11 bg-linear-to-b from-[#ff5252] to-[#df3030] text-[13px] leading-[20px]">
        SELL<span className="mx-1 block h-px bg-[#ff9a9a]" />
      </button>
      <div className="flex h-5 bg-white">
        <button aria-label="Azalt" className="flex w-5 items-center justify-center border border-[#adadad] bg-[#eee]"><Caret /></button>
        <input aria-label="Hacim" defaultValue="0.10" className="w-[55px] border-y border-[#adadad] bg-white pr-1 text-right text-[12px] text-black outline-none" />
        <button aria-label="Arttır" className="flex w-5 items-center justify-center border border-[#adadad] bg-[#eee]"><span className="rotate-180"><Caret /></span></button>
      </div>
      <button className="w-11 bg-linear-to-b from-[#ff5252] to-[#df3030] text-[13px] leading-[20px]">
        BUY<span className="mx-1 block h-px bg-[#ff9a9a]" />
      </button>
    </div>
    <div className="flex h-[34px] gap-0.5">
      {['80', '81'].map((p) => (
        <div key={p} className="flex flex-1 items-end justify-end gap-1 bg-linear-to-b from-[#df3030] to-[#ac0000] pr-2">
          <span className="pb-1 text-[12px] leading-none font-semibold">27</span>
          <span className="pb-0.5 text-[28px] leading-[28px]">{p}</span>
          <span className="self-start pt-[2px] text-[12px] leading-none font-semibold">7</span>
        </div>
      ))}
    </div>
  </div>
);

const Plot = () => (
  <div className="relative min-w-0 flex-1 overflow-hidden border border-white">
    <svg className="absolute inset-0 h-full w-full" shapeRendering="crispEdges" aria-hidden="true">
      <g transform="translate(-465 -54)">
        {CANDLES.map(([high, top, bottom, low, up], i) => (
          <g key={i} fill={up ? '#00ff00' : '#ff0000'}>
            <rect x={465 + i * 4} y={high} width="1" height={low - high} />
            <rect x={464 + i * 4} y={top} width="3" height={bottom - top} />
          </g>
        ))}
        <polyline points={MOVING_AVERAGE} fill="none" stroke="#fff" />
        <path d="M1560 54h9l-4.500 5z" fill="#778899" />
      </g>
    </svg>
    <div className="relative flex h-full items-start gap-[73px] pr-2.5">
      <div className="flex h-full w-[191px] shrink-0 flex-col">
        <div className="flex h-[17px] items-center gap-1.5 pl-[3px] text-[10px] text-white">
          <svg width="7" height="4" viewBox="0 0 7 4" aria-hidden="true"><path d="M0 4h7L3.500 0z" fill="#fff" /></svg>
          XAGUSD.,M30
        </div>
        <TradePanel />
        <div className="mt-auto"><CorrelationList /></div>
      </div>
      <div className="min-w-0 flex-1 pt-[18px] text-[15px] leading-[21px] whitespace-pre text-[#e8e8e8]">
        {NOTES.map((n) => (
          <p key={n}>{n}</p>
        ))}
      </div>
      <StatPanel />
    </div>
    <svg className="pointer-events-none absolute inset-0 h-full w-full" shapeRendering="crispEdges" aria-hidden="true">
      {LEVELS.map((l) => (
        <line
          key={l.price}
          x1="0"
          x2="100%"
          y1={priceToY(l.price) + (l.width === 1 ? 0.5 : 0)}
          y2={priceToY(l.price) + (l.width === 1 ? 0.5 : 0)}
          stroke={l.color}
          strokeWidth={l.width}
          strokeDasharray={l.dash || undefined}
        />
      ))}
    </svg>
  </div>
);

const BADGE: Record<string, string> = {
  '#ff00ff': 'bg-[#ff00ff]',
  '#778899': 'bg-white',
  '#ffff00': 'bg-[#ffff00]',
  '#32cd32': 'bg-[#32cd32]',
  '#00bfff': 'bg-[#00bfff]',
};

const PriceAxis = () => (
  <div className="relative w-[39px] shrink-0 overflow-hidden pt-[5px] text-[9px] text-white">
    {AXIS_PRICES.map((p) => (
      <div key={p} className="flex h-[33px] items-center gap-0.5">
        <span className="h-px w-0.5 bg-white" />
        {p}
      </div>
    ))}
    {LEVELS.map((l) => (
      <div
        key={l.price}
        className={`absolute left-0 h-[11px] w-9 pl-1 leading-[11px] text-black ${BADGE[l.color]}`}
        style={{ top: priceToY(l.price) - 5 }}
      >
        {l.price.toFixed(3)}
      </div>
    ))}
  </div>
);

const Chart = () => (
  <section className="flex min-w-0 flex-1 flex-col">
    <div className="flex min-h-0 flex-1 flex-col border-t-2 border-r-2 border-l-2 border-[#808080] border-r-[#e3e3e3] bg-black pt-0.5 pl-0.5">
      <div className="flex min-h-0 flex-1">
        <Plot />
        <PriceAxis />
      </div>
      <div className="flex h-5 overflow-hidden text-[9px] text-white">
        {TIMES.map((t) => (
          <div key={t} className="w-16 shrink-0 whitespace-nowrap">
            <div className="ml-px h-[3px] w-px bg-white" />
            <div className="leading-[11px]">{t}</div>
          </div>
        ))}
      </div>
    </div>
    <nav className="mt-0.5 flex h-[19px] border-t border-l border-black pl-[5px]">
      {CHART_TABS.map((t, i) => {
        const active = i === 13;
        const width = i < 8 ? 'w-[92px]' : i === 14 ? 'w-[104px]' : 'w-[95px]';
        return (
          <button
            key={i}
            className={`relative -mt-px shrink-0 text-[12px] leading-[18px] ${width} ${
              active ? 'border border-t-0 border-black bg-white text-black' : 'text-[#7a7a7a]'
            }`}
          >
            {t}
            {!active && i !== 12 && <span className="absolute top-[4px] right-0 h-3 w-px bg-[#7a7a7a]" />}
          </button>
        );
      })}
      <div className="ml-auto flex items-center gap-4 pr-2">
        <span className="rotate-90"><Caret /></span>
        <span className="-rotate-90"><Caret /></span>
      </div>
    </nav>
  </section>
);

/* ---------- terminal ---------- */

const ORDER_COLS = ['Emir', 'Zaman', 'Tür', 'Miktar', 'Sembol', 'Fiyat', 'S / L', 'T / P', 'Zaman', 'Fiyat', 'Swap', 'Kar'];

const TERMINAL_TABS = [
  'İşlem', 'Risk Analizi', 'Hesap geçmişi', 'Haberler', 'Uyarılar', 'Posta kutusu', 'Mağaza', 'Makaleler', 'Kod Kütüphanesi', 'Uzman danışmanlar', 'Günlük',
];

const Terminal = () => (
  <section className="flex h-[143px] shrink-0 overflow-hidden pt-[5px]">
    <div className="flex w-[15px] shrink-0 flex-col items-center">
      <button aria-label="Kapat" className="flex h-[14px] shrink-0 items-center"><X size={9} strokeWidth={4} /></button>
      <div className="flex h-[228px] w-3 shrink-0 items-center justify-center bg-linear-to-b from-[#dbe8f4] to-[#a9bccf]">
        <span className="-rotate-90 pt-0.5 text-[12px] leading-none">Terminal</span>
      </div>
    </div>
    <div className="min-w-0 flex-1">
      <div className="flex h-[126px] border-t border-l border-[#a0a0a0] bg-white">
        <table className="w-full table-fixed border-collapse">
          <colgroup>
            <col className="w-[166px]" />
            <col className="w-[283px]" />
            <col className="w-[129px]" />
            <col className="w-[102px]" />
            <col className="w-[128px]" />
            <col className="w-[129px]" />
            <col className="w-[127px]" />
            <col className="w-[129px]" />
            <col className="w-[283px]" />
            <col className="w-[128px]" />
            <col className="w-[127px]" />
            <col />
          </colgroup>
          <thead>
            <tr className="h-6 border-b border-[#c4c4c4]">
              {ORDER_COLS.map((c, i) => (
                <th key={i} className={`border-r border-[#e2e2e2] px-[5px] font-normal ${i === 0 ? 'text-left' : 'text-right'}`}>
                  {i === 5 ? (
                    <span className="flex items-center justify-end gap-2.5">
                      {c}
                      <svg width="9" height="8" viewBox="0 0 9 8" fill="none" aria-hidden="true">
                        <path d="M0 1h9M1 1.500l3.500 6 3.500-6" stroke="#a0a0a0" />
                      </svg>
                    </span>
                  ) : (
                    c
                  )}
                </th>
              ))}
            </tr>
          </thead>
          <tbody>
            {ORDERS.map((o, r) => (
              <tr key={o[0]} className={`h-5 border-b border-[#c4c4c4] align-top ${r % 2 ? 'bg-white' : 'bg-[#e9e9e9]'}`}>
                {o.map((v, i) => (
                  <td key={i} className="border-r border-[#c4c4c4] p-0 pr-[3px] text-right text-[11px] leading-[18px]">
                    {i === 0 ? (
                      <span className="flex h-[18px] items-center gap-1 pl-[3px]">
                        <svg width="15" height="15" viewBox="0 0 15 15" aria-hidden="true">
                          <path d="M1.500 .5h7l3 3v11h-10z" fill="#fff" stroke="#555" />
                          <path d="M8.500 .5v3h3" fill="none" stroke="#555" />
                          <circle cx="11" cy="11.500" r="3.200" fill="#e0411e" stroke="#8f2308" strokeWidth=".6" />
                        </svg>
                        {v}
                      </span>
                    ) : (
                      v
                    )}
                  </td>
                ))}
              </tr>
            ))}
          </tbody>
        </table>
        <div className="flex w-[21px] shrink-0 flex-col items-center justify-between bg-[#f0f0f0] py-2">
          <svg width="9" height="6" viewBox="0 0 9 6" aria-hidden="true"><path d="M1 5l3.500-4L8 5" fill="none" stroke="#505050" strokeWidth="1.500" /></svg>
          <div className="mt-5 h-[17px] w-[15px] bg-[#cdcdcd]" />
          <svg width="9" height="6" viewBox="0 0 9 6" aria-hidden="true"><path d="M1 1l3.500 4L8 1" fill="none" stroke="#505050" strokeWidth="1.500" /></svg>
        </div>
      </div>
      <nav className="flex h-6 border-t border-black pl-0.5">
        {TERMINAL_TABS.map((t) => {
          const active = t === 'Hesap geçmişi';
          return (
            <button
              key={t}
              className={`-mt-px flex h-5 shrink-0 items-center px-2.5 text-[11px] leading-none ${
                active ? 'border-x border-black bg-white text-black' : 'border-r border-[#7a7a7a] text-[#7a7a7a]'
              }`}
            >
              {t}
              {t === 'Posta kutusu' && <span className="mt-1 ml-1 size-1 rounded-full bg-red-600" />}
              {t === 'Mağaza' && <span className="ml-1 font-bold text-red-600">...</span>}
            </button>
          );
        })}
      </nav>
    </div>
  </section>
);

// red boxes and arrow the user drew over the whole window
const Markup = () => (
  <svg className="pointer-events-none absolute inset-0 h-full w-full" fill="none" stroke="#ff0000" strokeWidth="4" aria-hidden="true">
    <rect x="357" y="842" width="237" height="101" />
    <rect x="903" y="842" width="52" height="101" />
    <rect x="1152" y="842" width="59" height="102" />
    <rect x="1574" y="841" width="49" height="101" />
    <rect x="1850" y="826" width="57" height="116" />
    <path d="M930 835L1418 235" />
    <path d="M1427 223l-6 18-10-9zM927 840l3-10 6 5z" fill="#ff0000" stroke="none" />
  </svg>
);

export default function App() {
  return (
    <div className="relative flex h-screen w-full flex-col overflow-hidden bg-[#f0f0f0] font-['Open_Sans',sans-serif] text-[12px] text-black">
      <TopToolbar />
      <DrawToolbar />
      <main className="flex min-h-0 flex-1">
        <aside className="flex w-[460px] shrink-0 flex-col border-t border-[#a0a0a0]">
          <MarketWatch />
          <Navigator />
        </aside>
        <Chart />
      </main>
      <Terminal />
      <Markup />
    </div>
  );
}
